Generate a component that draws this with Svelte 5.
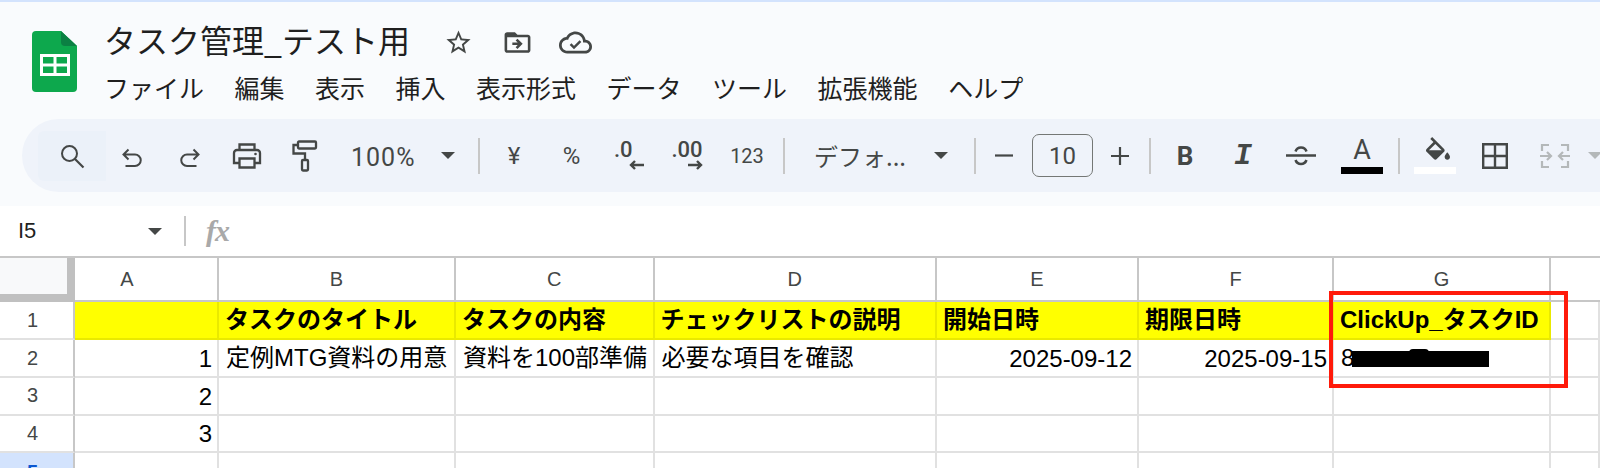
<script>
  const menus = ['ファイル', '編集', '表示', '挿入', '表示形式', 'データ', 'ツール', '拡張機能', 'ヘルプ'];
  const columns = ['A', 'B', 'C', 'D', 'E', 'F', 'G'];
  const headers = ['', 'タスクのタイトル', 'タスクの内容', 'チェックリストの説明', '開始日時', '期限日時', 'ClickUp_タスクID'];
</script>

<div class="page">
  <div class="strip"></div>

  <header class="top">
    <svg class="logo" width="45" height="61" viewBox="0 0 45 61">
      <path d="M4 0H29L45 15V57a4 4 0 0 1-4 4H4a4 4 0 0 1-4-4V4a4 4 0 0 1 4-4z" fill="#0da84d" />
      <path d="M29 0L45 15H33a4 4 0 0 1-4-4z" fill="#0b8043" />
      <path d="M8 23H38V45H8zM11 26V32.5H21.5V26zM24.5 26V32.5H35V26zM11 35.5V42H21.5V35.5zM24.5 35.5V42H35V35.5z" fill="#fff" fill-rule="evenodd" />
    </svg>
    <div class="titles">
      <div class="title-row">
        <span class="title">タスク管理_テスト用</span>
        <svg class="star" width="29" height="29" viewBox="0 0 24 24"><path fill="#444746" d="M22 9.24l-7.19-.62L12 2 9.19 8.63 2 9.24l5.46 4.73L5.82 21 12 17.27 18.18 21l-1.63-7.03L22 9.24zM12 15.4l-3.76 2.27 1-4.28-3.32-2.88 4.38-.38L12 6.1l1.71 4.04 4.38.38-3.32 2.88 1 4.28L12 15.4z" /></svg>
        <svg class="move" width="31" height="31" viewBox="0 0 24 24"><path fill="#444746" d="M20 6h-8l-2-2H4c-1.1 0-2 .9-2 2v12c0 1.1.9 2 2 2h16c1.1 0 2-.9 2-2V8c0-1.1-.9-2-2-2zm0 12H4V8h16v10zm-8.01-9l-1.41 1.41L12.16 12H8v2h4.16l-1.59 1.59L11.99 17 16 13.01 11.99 9z" /></svg>
        <svg class="cloud" width="33" height="33" viewBox="0 0 24 24"><path fill="#444746" d="M12 4C9.11 4 6.6 5.64 5.35 8.04 2.34 8.36 0 10.91 0 14c0 3.31 2.69 6 6 6h13c2.76 0 5-2.24 5-5 0-2.64-2.05-4.78-4.65-4.96C18.67 6.59 15.64 4 12 4zm7 14H6c-2.21 0-4-1.79-4-4s1.79-4 4-4h.71C7.37 7.69 9.48 6 12 6c3.04 0 5.5 2.46 5.5 5.5v.5H19c1.66 0 3 1.34 3 3s-1.34 3-3 3z" /><path d="M8.4 13.2l2.5 2.5 4.7-4.7" fill="none" stroke="#444746" stroke-width="1.8" /></svg>
      </div>
      <nav class="menu">
        {#each menus as item}
          <span>{item}</span>
        {/each}
      </nav>
    </div>
  </header>

  <div class="toolbar">
    <div class="search">
      <svg width="26" height="26" viewBox="0 0 26 26"><circle cx="10.5" cy="10.5" r="7.5" fill="none" stroke="#444746" stroke-width="2" /><path d="M16 16l8.5 8.5" stroke="#444746" stroke-width="2.2" /></svg>
    </div>

    <div class="group first">
      <div class="tool hist">
        <svg width="24" height="24" viewBox="0 0 24 24" fill="none" stroke="#444746" stroke-width="2"><path d="M8.5 2.5L3.5 7.5l5 5M3.5 7.5H15a5.6 5.6 0 0 1 0 11.5H5.5" /></svg>
      </div>
      <div class="tool hist">
        <svg width="24" height="24" viewBox="0 0 24 24" fill="none" stroke="#444746" stroke-width="2"><path d="M15.5 2.5l5 5-5 5M20.5 7.5H9a5.6 5.6 0 0 0 0 11.5h9.5" /></svg>
      </div>
      <div class="tool">
        <svg width="30" height="26" viewBox="0 0 30 26" fill="none" stroke="#444746" stroke-width="2.3"><path d="M7.5 7V1.5H22.5V7M7.5 20H2V10a3 3 0 0 1 3-3H25a3 3 0 0 1 3 3V20H22.5" /><path d="M7.5 15.5H22.5V24.5H7.5z" /><circle cx="23.5" cy="11" r="1.3" fill="#444746" stroke="none" /></svg>
      </div>
      <div class="tool">
        <svg width="26" height="32" viewBox="0 0 26 32" fill="none" stroke="#444746" stroke-width="2.3"><rect x="6" y="1.5" width="18" height="7" rx="1" /><path d="M6 5H1.5V13.5H13V20" /><rect x="10" y="20" width="6" height="10.5" rx="1" /></svg>
      </div>
    </div>

    <span class="zoom-value">100%</span>
    <span class="caret after-zoom"></span>
    <span class="sep one"></span>

    <div class="group numbers">
      <div class="tool label">¥</div>
      <div class="tool label">%</div>
      <div class="tool decimal">
        <span>.0</span>
        <svg width="16" height="10" viewBox="0 0 16 10" fill="none" stroke="#444746" stroke-width="2.4"><path d="M15 5H2M6 1L2 5l4 4" /></svg>
      </div>
      <div class="tool decimal">
        <span>.00</span>
        <svg width="16" height="10" viewBox="0 0 16 10" fill="none" stroke="#444746" stroke-width="2.4"><path d="M1 5H14M10 1l4 4-4 4" /></svg>
      </div>
      <div class="tool label small">123</div>
    </div>
    <span class="sep two"></span>

    <span class="font-name">デフォ...</span>
    <span class="caret after-font"></span>
    <span class="sep three"></span>

    <div class="tool size-minus">
      <svg width="18" height="3" viewBox="0 0 18 3"><path d="M0 1.5H18" stroke="#444746" stroke-width="2.2" /></svg>
    </div>
    <div class="size-box">10</div>
    <div class="tool size-plus">
      <svg width="18" height="18" viewBox="0 0 18 18"><path d="M0 9H18M9 0V18" stroke="#444746" stroke-width="2.2" /></svg>
    </div>
    <span class="sep four"></span>

    <div class="group styles">
      <div class="tool bold">B</div>
      <div class="tool italic">I</div>
      <div class="tool">
        <svg width="30" height="22" viewBox="0 0 30 22" fill="none" stroke="#444746" stroke-width="2.5"><path d="M0 10.5H30M9.5 6.5a5.8 5.8 0 0 1 11 0M9.5 15a5.8 5.8 0 0 0 11 0" /></svg>
      </div>
      <div class="tool color-a">
        <span>A</span>
        <i class="bar black"></i>
      </div>
    </div>
    <span class="sep five"></span>

    <div class="group last">
      <div class="tool fill">
        <svg width="32" height="32" viewBox="0 0 24 24"><path fill="#444746" d="M16.56 8.94 7.62 0 6.21 1.41l2.38 2.38-5.15 5.15c-.59.59-.59 1.54 0 2.12l5.5 5.5c.29.29.68.44 1.06.44s.77-.15 1.06-.44l5.5-5.5c.59-.58.59-1.53 0-2.12zM5.21 10 10 5.21 14.79 10H5.21zM19 11.5s-2 2.17-2 3.5c0 1.1.9 2 2 2s2-.9 2-2c0-1.33-2-3.5-2-3.5z" /></svg>
        <i class="bar white"></i>
      </div>
      <div class="tool">
        <svg width="26" height="26" viewBox="0 0 26 26" fill="none" stroke="#444746" stroke-width="2.4"><path d="M1.2 1.2H24.8V24.8H1.2zM13 1.2V24.8M1.2 13H24.8" /></svg>
      </div>
      <div class="tool">
        <svg width="30" height="26" viewBox="0 0 30 26" fill="none" stroke="#b4b8b9" stroke-width="2.2"><path d="M2 8V2H9M2 18V24H9M28 8V2H21M28 18V24H21M0 13H11M7 9l4 4-4 4M30 13H19M23 9l-4 4 4 4" /></svg>
      </div>
    </div>
    <span class="caret off"></span>
  </div>

  <div class="formula">
    <span class="cell-ref">I5</span>
    <span class="caret after-ref"></span>
    <span class="sep six"></span>
    <span class="fx">fx</span>
  </div>

  <div class="sheet">
    <div class="corner"></div>
    {#each columns as col}
      <div class="col-head">{col}</div>
    {/each}
    <div class="col-head"></div>

    <div class="row-head strong">1</div>
    {#each headers as h}
      <div class="cell yellow">{h}</div>
    {/each}
    <div class="cell"></div>

    <div class="row-head">2</div>
    <div class="cell num">1</div>
    <div class="cell">定例MTG資料の用意</div>
    <div class="cell">資料を100部準備</div>
    <div class="cell">必要な項目を確認</div>
    <div class="cell num">2025-09-12</div>
    <div class="cell num">2025-09-15</div>
    <div class="cell id">8<span class="redact"></span></div>
    <div class="cell"></div>

    {#each [2, 3] as n}
      <div class="row-head">{n + 1}</div>
      <div class="cell num">{n}</div>
      {#each Array(7) as _}
        <div class="cell"></div>
      {/each}
    {/each}

    <div class="row-head active">5</div>
    {#each Array(8) as _}
      <div class="cell"></div>
    {/each}

    <div class="callout"></div>
  </div>
</div>

<style>
  :global(body) {
    margin: 0;
    background: #f9fbfd;
  }
  .page {
    height: 468px;
    overflow: hidden;
    font-family: "Liberation Sans", "Noto Sans CJK JP", sans-serif;
    color: #1f1f1f;
  }
  .strip {
    height: 2px;
    background: #d3e3fd;
  }

  .top {
    display: flex;
    height: 117px;
    padding: 29px 0 0 32px;
    box-sizing: border-box;
  }
  .logo {
    flex: none;
  }
  .titles {
    margin-left: 27px;
    margin-top: -9px;
  }
  .title-row {
    display: flex;
    align-items: center;
    height: 38px;
  }
  .title-row svg {
    margin-top: 2px;
  }
  .title {
    font-size: 32px;
    width: 304px;
    margin-bottom: 4px;
    white-space: nowrap;
    font-family: "Noto Sans CJK JP", sans-serif;
  }
  .star {
    margin-left: 36px;
  }
  .move {
    margin-left: 29px;
  }
  .cloud {
    margin-left: 26px;
  }
  .menu {
    display: flex;
    gap: 30.5px;
    margin-top: 9px;
    font-size: 25px;
    line-height: 36px;
    font-family: "Noto Sans CJK JP", sans-serif;
    white-space: nowrap;
  }

  .toolbar {
    display: flex;
    align-items: center;
    height: 73px;
    margin-left: 22px;
    padding-left: 16px;
    background: #eff3fa;
    border-radius: 37px 0 0 37px;
    color: #444746;
    white-space: nowrap;
  }
  .search {
    flex: none;
    width: 68px;
    height: 50px;
    display: flex;
    align-items: center;
    justify-content: center;
    background: #ebf1f9;
    border-radius: 6px 0 0 6px;
  }
  .group {
    display: flex;
    align-items: center;
    gap: 11.5px;
    flex: none;
  }
  .group.first {
    margin-left: 3px;
  }
  .group.numbers {
    margin-left: 11px;
  }
  .group.styles {
    margin-left: 11px;
    gap: 12px;
  }
  .group.last {
    margin-left: 12px;
    gap: 14px;
  }
  .tool {
    flex: none;
    width: 46px;
    height: 46px;
    display: flex;
    align-items: center;
    justify-content: center;
  }
  .hist svg {
    margin-top: 6px;
  }
  .sep {
    flex: none;
    width: 2px;
    height: 36px;
    background: #c7c7c7;
  }
  .sep.one { margin-left: 23px; }
  .sep.two { margin-left: 16px; }
  .sep.three { margin-left: 26px; }
  .sep.four { margin-left: 6px; }
  .sep.five { margin-left: 13px; }
  .sep.six { height: 30px; margin-left: 22px; }

  .caret {
    flex: none;
    width: 0;
    height: 0;
    border-left: 7px solid transparent;
    border-right: 7px solid transparent;
    border-top: 7px solid #444746;
  }
  .caret.after-zoom { margin-left: 25px; }
  .caret.after-font { margin-left: 28px; }
  .caret.after-ref { margin-left: 101px; }
  .caret.off {
    margin-left: 10px;
    border-top-color: #b4b8b9;
  }

  .zoom-value {
    flex: none;
    width: 65px;
    margin-left: 23.5px;
    margin-top: 4px;
    font-family: Roboto, sans-serif;
    font-size: 25px;
    letter-spacing: 1px;
  }
  .label {
    font-family: Roboto, sans-serif;
    font-size: 24px;
  }
  .label.small {
    font-size: 20px;
    margin-left: 3px;
    margin-right: -3px;
  }
  .decimal {
    flex-direction: column;
    align-items: flex-start;
    font-family: Roboto, sans-serif;
    font-weight: 500;
    font-size: 22px;
    line-height: 18px;
    padding-left: 8px;
    box-sizing: border-box;
  }
  .decimal svg {
    margin-top: 1px;
    margin-left: 15px;
  }
  .font-name {
    flex: none;
    width: 92px;
    margin-left: 29px;
    font-family: "Noto Sans CJK JP", sans-serif;
    font-size: 24px;
  }
  .size-minus { margin-left: 5px; }
  .size-plus { margin-left: 4px; }
  .size-box {
    flex: none;
    width: 61px;
    height: 43px;
    margin-left: 5px;
    box-sizing: border-box;
    border: 1.5px solid #747775;
    border-radius: 7px;
    display: flex;
    align-items: center;
    justify-content: center;
    font-family: Roboto, sans-serif;
    font-size: 24px;
  }
  .bold {
    font-family: Roboto, sans-serif;
    font-weight: 700;
    font-size: 26px;
  }
  .italic {
    font-family: "Liberation Mono", monospace;
    font-weight: 700;
    font-style: italic;
    font-size: 30px;
  }
  .color-a,
  .fill {
    flex-direction: column;
    justify-content: flex-end;
    height: 50px;
  }
  .color-a {
    margin-left: 3px;
  }
  .color-a span {
    font-family: Roboto, sans-serif;
    font-size: 27px;
    line-height: 27px;
    margin-bottom: 3px;
  }
  .fill svg {
    margin-bottom: -2px;
    margin-left: 6px;
  }
  .bar {
    display: block;
    flex: none;
    width: 42px;
    height: 7px;
    margin-bottom: 7px;
  }
  .bar.black { background: #000; }
  .bar.white { background: #fff; }

  .formula {
    display: flex;
    align-items: center;
    height: 66px;
    padding-top: 14px;
    box-sizing: border-box;
    background: linear-gradient(#f9fbfd 0 14px, #fff 14px);
    border-bottom: 2px solid #c7c7c7;
    padding-left: 18px;
    color: #444746;
  }
  .cell-ref {
    flex: none;
    width: 29px;
    font-size: 22px;
    color: #1f1f1f;
  }
  .fx {
    margin-left: 20px;
    font-family: "Liberation Serif", serif;
    font-style: italic;
    font-weight: 700;
    font-size: 30px;
    color: #a9a9a9;
    letter-spacing: -1px;
  }

  .sheet {
    position: relative;
    display: grid;
    grid-template-columns: 75px 144px 237px 198.5px 282.5px 202px 195px 217px 1fr;
    grid-template-rows: 44px 38px 38px 37.5px 37.5px 40px;
    background: #fff;
  }
  .corner {
    box-sizing: border-box;
    background: #f8f9fa;
    border-right: 8px solid #c0c0c0;
    border-bottom: 8px solid #c0c0c0;
  }
  .col-head,
  .row-head {
    display: flex;
    align-items: center;
    justify-content: center;
    box-sizing: border-box;
    font-size: 20px;
    color: #444746;
    border-right: 2px solid #c7c7c7;
    border-bottom: 2px solid #c7c7c7;
    background: #fff;
  }
  .col-head:nth-child(2) {
    padding-right: 38px;
  }
  .col-head:nth-child(9) {
    border-right: 0;
  }
  .row-head {
    border-bottom: 2px solid #e1e1e1;
    padding-right: 8px;
  }
  .row-head.active {
    background: #d3e3fd;
    color: #0b57d0;
    font-weight: 700;
    align-items: flex-start;
    padding-top: 8px;
  }
  .cell {
    box-sizing: border-box;
    display: flex;
    align-items: center;
    padding: 0 5px 0 7px;
    font-size: 24px;
    line-height: 30px;
    color: #000;
    white-space: nowrap;
    border-right: 2px solid #e1e1e1;
    border-bottom: 2px solid #e1e1e1;
    min-width: 0;
  }
  .cell.yellow {
    background: #ff0;
    font-weight: 700;
    padding-left: 6px;
    border-right-color: #e9e900;
    border-bottom-color: #e9e900;
  }
  .cell.num {
    justify-content: flex-end;
    padding-top: 2px;
  }
  .cell.id {
    position: relative;
  }
  .redact {
    position: absolute;
    left: 18px;
    top: 11px;
    width: 137px;
    height: 16px;
    background: #000;
  }
  .redact::after {
    content: "";
    position: absolute;
    left: 57px;
    top: -2px;
    width: 20px;
    height: 4px;
    border-radius: 4px 4px 0 0;
    background: #000;
  }
  .callout {
    position: absolute;
    left: 1329px;
    top: 33px;
    width: 239px;
    height: 97px;
    box-sizing: border-box;
    border: 4px solid #ff1a0a;
  }
</style>
